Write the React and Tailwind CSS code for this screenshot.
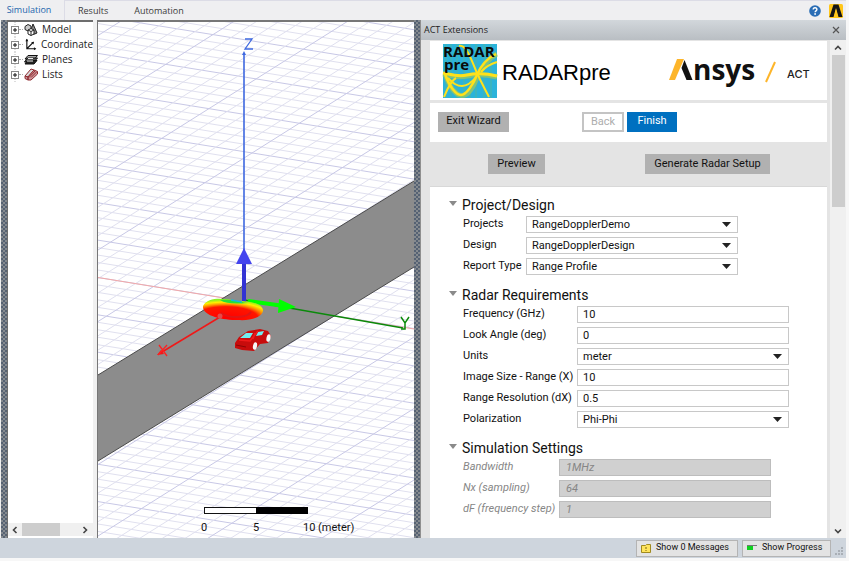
import * as React from 'react';

const TABS = ['Simulation', 'Results', 'Automation'];

const PROJECT_FIELDS = [
    { id: 'projects', label: 'Projects', value: 'RangeDopplerDemo', type: 'select' },
    { id: 'design', label: 'Design', value: 'RangeDopplerDesign', type: 'select' },
    { id: 'report', label: 'Report Type', value: 'Range Profile', type: 'select' },
];

const RADAR_FIELDS = [
    { id: 'frequency', label: 'Frequency (GHz)', value: '10' },
    { id: 'look-angle', label: 'Look Angle (deg)', value: '0' },
    { id: 'units', label: 'Units', value: 'meter', type: 'select' },
    { id: 'image-size', label: 'Image Size - Range (X)', value: '10' },
    { id: 'resolution', label: 'Range Resolution (dX)', value: '0.5' },
    { id: 'polarization', label: 'Polarization', value: 'Phi-Phi', type: 'select' },
];

const SIMULATION_FIELDS = [
    { id: 'bandwidth', label: 'Bandwidth', value: '1MHz', disabled: true },
    { id: 'nx', label: 'Nx (sampling)', value: '64', disabled: true },
    { id: 'df', label: 'dF (frequency step)', value: '1', disabled: true },
];

function HelpIcon() {
    return (
        <svg viewBox="0 0 12 12" className="h-3 w-3">
            <circle cx="6" cy="6" r="5.8" fill="#2a6db5" />
            <path d="M4.2 4.6c0-2.4 3.7-2.4 3.7 0 0 1.3-1.8 1.3-1.8 2.7" fill="none" stroke="#fff" strokeWidth="1.4" />
            <circle cx="6.1" cy="9" r="0.9" fill="#fff" />
        </svg>
    );
}

function AppIcon() {
    return (
        <svg viewBox="0 0 14 14" className="h-[14px] w-[14px]">
            <rect width="14" height="14" rx="1.5" fill="#ffc61a" />
            <path d="M0.5 13L4.5 0.5H9.5L13.5 13H9.5L7 4 4.5 13z" fill="#151515" />
            <path d="M5 13L7 5l2 8z" fill="#ffc61a" />
        </svg>
    );
}

function TabBar() {
    return (
        <nav className="flex h-5 shrink-0 items-stretch bg-[#efeff1] font-['Open_Sans',sans-serif] text-[9px] leading-[18px] text-[#3b3b3b]">
            {TABS.map((tab, i) => (
                <button
                    key={tab}
                    className={i === 0
                        ? 'w-[65px] border-r border-[#dcdce6] pr-[6px] text-center text-[#1d65ad]'
                        : 'border-t border-[#dcdce6] px-[13px] text-left'}
                >
                    {tab}
                </button>
            ))}
            <div className="flex flex-1 items-center justify-end gap-2 border-t border-[#dcdce6] pr-[3px]">
                <button aria-label="Help"><HelpIcon /></button>
                <button aria-label="Application"><AppIcon /></button>
            </div>
        </nav>
    );
}

function Splitter() {
    return <div className="w-[6px] shrink-0 bg-[repeating-conic-gradient(#566273_0_25%,#858a8f_0_50%)] bg-[size:4px_4px]" />;
}

function ModelIcon() {
    return (
        <svg viewBox="0 0 14 13" className="h-[13px] w-[14px]" fill="#fff" stroke="#222" strokeWidth="1">
            <path d="M1 3.5l3-2 3 1.5v3.5l-3 1.5-3-1.5z" fill="#c9c9c9" />
            <path d="M9 1l4 9-3.5 1.5L6.5 8z" fill="#8a8a8a" />
            <path d="M4 7l3-1.5L10 7v4l-3 1.5L4 11z" />
            <path d="M4 7l3 1.5L10 7M7 8.5v4" fill="none" />
        </svg>
    );
}

function CoordinateIcon() {
    return (
        <svg viewBox="0 0 14 13" className="h-[13px] w-[14px]" fill="none" stroke="#111">
            <path d="M3 1v10h9M3 11l7-7" strokeWidth="1.2" />
            <path d="M1.5 3L3 0.5 4.5 3zM10.5 9.5l2.5 1.5-2.5 1.5zM7.5 4l3-0.5L10 6.5z" fill="#111" stroke="none" />
        </svg>
    );
}

function PlanesIcon() {
    return (
        <svg viewBox="0 0 14 13" className="h-[13px] w-[14px]" stroke="#111">
            <path d="M4 2.5h9.5L10.5 6H1z" fill="#aaa" />
            <path d="M3.5 5h10L10 9H0.5z" fill="#555" />
            <path d="M3.5 7.5h9.5l-3 3.5H1z" fill="#222" />
            <path d="M4 5.5h5M3 8h6" stroke="#eee" />
        </svg>
    );
}

function ListsIcon() {
    return (
        <svg viewBox="0 0 14 13" className="h-[13px] w-[14px]" stroke="#8f2a30">
            <path d="M1 8L7 1l3 1-6 7z" fill="#dadada" />
            <path d="M1 8l3 1v3l-3-1.5zM4 9l6-7 3.5 1.5v2.5L7 12 4 12z" fill="#cf9a9c" />
            <path d="M5 9.5l6-6.5M7 9.5l5.5-5.5" fill="none" />
        </svg>
    );
}

const TREE = [
    { name: 'Model', Icon: ModelIcon },
    { name: 'Coordinate', Icon: CoordinateIcon },
    { name: 'Planes', Icon: PlanesIcon },
    { name: 'Lists', Icon: ListsIcon },
];

function Chevron({ d }) {
    return (
        <svg viewBox="0 0 8 8" className="h-2 w-2" fill="none" stroke="#444" strokeWidth="1.6">
            <path d={d} />
        </svg>
    );
}

function ModelTree() {
    return (
        <aside className="flex w-[86px] shrink-0 flex-col overflow-hidden border-t-2 border-l border-[#6d6d6d] bg-white">
            <ul className="flex-1 pl-[3px] font-['Open_Sans',sans-serif] text-[10px] leading-[15px] text-[#222]">
                {TREE.map(({ name, Icon }) => (
                    <li key={name} className="flex h-[15px] items-center">
                        <button aria-label={'Expand ' + name}>
                            <svg viewBox="0 0 8 15" className="h-[15px] w-2" fill="none" stroke="#555">
                                <path d="M4 0v4M4 12v3" stroke="#bbb" strokeDasharray="1 1" />
                                <rect x="0.5" y="4.5" width="7" height="7" stroke="#888" />
                                <path d="M2 8h4M4 6v4" stroke="#111" />
                            </svg>
                        </button>
                        <span className="mr-[1px] w-[4px] border-t border-dotted border-[#aaa]" />
                        <Icon />
                        <span className="ml-1">{name}</span>
                    </li>
                ))}
            </ul>
            <div className="mb-[2px] flex h-[13px] items-center bg-[#f0f0f0] pr-1">
                <button aria-label="Scroll left" className="w-[14px] pl-[3px]"><Chevron d="M5.5 1L2.5 4l3 3" /></button>
                <div className="h-full w-[38px] bg-[#cdcdcd]" />
                <button aria-label="Scroll right" className="ml-auto"><Chevron d="M2.5 1l3 3-3 3" /></button>
            </div>
        </aside>
    );
}

// Grid lines are stored as the height at which they cross the left edge.
const yLines = Array.from({ length: 78 }, (_, i) => ({ y: 255.5 + (i - 42) * 7.47, major: (i - 42) % 5 === 0 }));
const xLines = Array.from({ length: 52 }, (_, i) => ({ y: 371 + (i - 26) * 14.3, major: (i - 26) % 5 === 0 }));

function Scene() {
    return (
        <svg viewBox="0 0 316 516" preserveAspectRatio="xMidYMid slice" className="block h-full w-full" role="img" aria-label="3D view">
            <defs>
                <radialGradient id="lobe" cx="0.38" cy="0.9" r="0.86">
                    <stop offset="0" stopColor="#f00" />
                    <stop offset="0.62" stopColor="#ff1500" />
                    <stop offset="0.76" stopColor="#ff9a00" />
                    <stop offset="0.87" stopColor="#ffef00" />
                    <stop offset="1" stopColor="#90f020" />
                </radialGradient>
            </defs>
            <rect width="316" height="516" fill="#fff" />
            {yLines.map(({ y, major }) => (
                <line key={y} x1="0" y1={y} x2="316" y2={y + 51} stroke={major ? '#c8c8e6' : '#e0e0ef'} />
            ))}
            {xLines.map(({ y, major }) => (
                <line key={y} x1="0" y1={y} x2="316" y2={y - 199} stroke={major ? '#c8c8e6' : '#e0e0ef'} />
            ))}
            <line x1="0" y1="255.5" x2="316" y2="307" stroke="#f3a9a9" />
            <path d="M0 353L316 159v86L0 439z" fill="#8c8c8c" />
            <path d="M0 353L316 159M0 439L316 245" stroke="#4a4a4a" />

            <path d="M146 278L305 306" stroke="#0a8a0a" strokeWidth="1.5" />
            <path d="M303 295l4 6 4-6M307 301v6h-4" fill="none" stroke="#0a8a0a" strokeWidth="1.5" />
            <path d="M146 278V32" stroke="#3e68e0" strokeWidth="1.6" />
            <path d="M144 33l2-4 2 4z" fill="#3e68e0" />
            <path d="M147 17h7l-7 10h8" fill="none" stroke="#3e68e0" strokeWidth="1.3" />
            <path d="M146 280v-44" stroke="#3333d4" strokeWidth="4" />
            <path d="M146 226l8 16h-16z" fill="#4444ee" />

            <path d="M150 279l36 5" stroke="#0f0" strokeWidth="4" />
            <path d="M181 277l17 8-18 6z" fill="#0f0" />
            <path d="M105 284c5-9 20-8 33-5 14 0 26 2 27 9 0 7-12 11-25 10-15 0-36-4-35-14z" fill="url(#lobe)" />
            <path d="M122 278c9-1 15 1 28 3-12 1-22 1-28-3z" fill="#25e03a" />
            <path d="M133 278l11 2" stroke="#19b8d8" strokeWidth="1.5" />
            <path d="M123 291c9 6 26 5 30-1" fill="none" stroke="#e01515" strokeWidth="2" />
            <path d="M122 295L64 330" stroke="#f01818" strokeWidth="1.5" />
            <circle cx="122" cy="294" r="2.5" fill="#e24b4b" />
            <path d="M59 333l4-5 3 4z" fill="#f01818" />
            <path d="M61 323l8 11M69 323l-9 10" stroke="#ff2020" strokeWidth="1.3" />

            <path d="M137 321l4-6 9-6 12-2 8 2 3 5-3 7-8 1-6 7-12-1-7-2z" fill="#c80c0c" />
            <path d="M142 316l6-5h7l-3 5z" fill="#70eef0" />
            <path d="M158 314l2-4 6-1-2 4z" fill="#70eef0" />
            <path d="M141 318l11 1 8-10M157 311l-2 6" fill="none" stroke="#f01a1a" strokeWidth="1.5" />
            <path d="M138 323l10 2" stroke="#8d0505" />
            <ellipse cx="157" cy="324" rx="2" ry="3.8" fill="#f6f6f6" transform="rotate(12 157 324)" />
            <ellipse cx="170.5" cy="316" rx="2" ry="3.8" fill="#f6f6f6" transform="rotate(12 170.5 316)" />

            <rect x="106.5" y="485.5" width="103" height="6" fill="#fff" stroke="#111" />
            <rect x="158" y="485" width="52" height="7" fill="#000" />
            <g fontFamily="Roboto, Liberation Sans, sans-serif" fontSize="11" fill="#111">
                <text x="103" y="509">0</text>
                <text x="155" y="509">5</text>
                <text x="205" y="509">10 (meter)</text>
            </g>
        </svg>
    );
}

function RadarPicture() {
    return (
        <svg viewBox="0 0 54 54" className="h-[54px] w-[54px] overflow-visible" role="img" aria-label="RADAR pre">
            <rect width="54" height="54" fill="#2bb3da" />
            <path d="M3 0v54M8 0v54M14 0v54M21 0v54M27 0v54M33 0v54M41 0v54M48 0v54" stroke="#4db7a8" strokeWidth="1.5" opacity="0.7" />
            <g fill="none" stroke="#b6cf42" strokeWidth="5" opacity="0.6">
                <path d="M0 30c10 2 15 4 24 2s18-2 30 1" />
                <path d="M2 30c8 22 20 32 31 6 4-10 11-21 21-26" />
            </g>
            <g fill="none" stroke="#ffe11a" strokeWidth="2">
                <path d="M0 29c10 2 15 4 24 2s18-2 30 1" strokeWidth="3" />
                <path d="M2 30c4 12 11 21 16 21s12-10 16-20S45 14 53 10" strokeWidth="2.5" />
                <path d="M1 53c4-10 8-17 12-19M16 2c8-2 13 16 18 27s8 16 12 24" />
                <path d="M5 34c6 6 9 8 14 8s10-4 14-9M38 28c5-6 9-8 16-10" />
            </g>
            <g fontFamily="Open Sans, sans-serif" fontSize="15" fontWeight="700" fill="#0a0a0a">
                <text x="0" y="13">RADAR</text>
                <text x="1" y="26">pre</text>
            </g>
        </svg>
    );
}

function AnsysLogo() {
    return (
        <svg viewBox="0 -5 146 42" className="ml-auto h-[42px] w-[146px]" role="img" aria-label="Ansys ACT">
            <path d="M0 25L8 4h7L6 25z" fill="#fdb52a" />
            <path d="M15.5 5l8 20h-6L12.5 13z" fill="#111" />
            <text x="24" y="25" fontFamily="Open Sans, sans-serif" fontSize="28" fontWeight="700" fill="#111">nsys</text>
            <path d="M97 27l9-20" stroke="#fdb52a" strokeWidth="2" />
            <text x="118" y="23" fontFamily="Inter, sans-serif" fontSize="11" fontWeight="500" fill="#222">ACT</text>
        </svg>
    );
}

function Field({ field, labelClass }) {
    const { id, label, value, type, disabled } = field;
    return (
        <div className="flex h-[17px] items-center whitespace-nowrap">
            <label htmlFor={id} className={labelClass}>{label}</label>
            {type === 'select' ? (
                <span className="relative w-[212px]">
                    <select id={id} className="block h-[17px] w-full appearance-none border border-[#c8c8c8] bg-white px-[5px] leading-[15px]">
                        <option>{value}</option>
                    </select>
                    <svg viewBox="0 0 9 5" className="pointer-events-none absolute top-[6px] right-[7px] h-[5px] w-[9px]">
                        <path d="M0 0h9L4.5 5z" fill="#222" />
                    </svg>
                </span>
            ) : (
                <input
                    id={id}
                    defaultValue={value}
                    disabled={disabled}
                    className={disabled
                        ? 'h-[17px] w-[212px] border border-[#bdbdbd] bg-[#d0d0d0] px-[6px] text-[#868686] italic'
                        : 'h-[17px] w-[212px] border border-[#c8c8c8] bg-white px-[5px]'}
                />
            )}
        </div>
    );
}

function Section({ title, fields, labelClass }) {
    return (
        <section>
            <h2 className="text-[14px] leading-[21px]">
                <button className="flex h-[21px] items-center">
                    <svg viewBox="0 0 8 5" className="mr-[5px] mb-1 h-[5px] w-2">
                        <path d="M0 0h8L4 5z" fill="#8a8a8a" />
                    </svg>
                    {title}
                </button>
            </h2>
            <div className="flex flex-col gap-1 pl-[14px]">
                {fields.map((field) => (
                    <Field key={field.id} field={field} labelClass={labelClass} />
                ))}
            </div>
        </section>
    );
}

function ExtensionPanel() {
    return (
        <section className="flex w-[426px] shrink-0 flex-col border-l border-[#8f8f8f] bg-[#e4e4e4]">
            <header className="flex h-5 shrink-0 items-center justify-between bg-linear-to-b from-[#d2d7db] to-[#b9bec3] pr-[6px] pl-[3px] font-['Open_Sans',sans-serif] text-[9px] text-[#222]">
                ACT Extensions
                <button aria-label="Close">
                    <svg viewBox="0 0 8 8" className="h-2 w-2" stroke="#555" strokeWidth="1.2">
                        <path d="M1 1l6 6M7 1L1 7" />
                    </svg>
                </button>
            </header>
            <div className="flex min-h-0 flex-1">
                <div className="flex min-w-0 flex-1 flex-col pt-[1px] pr-[3px] pl-[9px] font-[Roboto,'Liberation_Sans',sans-serif] text-[11px] text-[#111]">
                    <div className="flex h-[59px] items-center bg-white pr-[12px] pl-[13px]">
                        <RadarPicture />
                        <h1 className="ml-[5px] pt-1 font-['Liberation_Sans',Arial,sans-serif] text-[22px] text-black">RADARpre</h1>
                        <AnsysLogo />
                    </div>
                    <div className="mt-[3px] flex h-[39px] items-center bg-white px-2 pb-[2px]">
                        <button className="h-5 w-[71px] bg-[#b1b1b1]">Exit Wizard</button>
                        <button className="ml-[73px] h-5 w-[42px] border-2 border-[#c4c4c4] bg-white text-[#adadad]" disabled>Back</button>
                        <button className="ml-[3px] h-5 w-[50px] bg-[#0070c0] text-white">Finish</button>
                    </div>
                    <div className="flex h-11 items-center pr-[57px] pl-[58px]">
                        <button className="h-5 w-[57px] bg-[#b1b1b1]">Preview</button>
                        <button className="ml-auto h-5 w-[125px] bg-[#b1b1b1]">Generate Radar Setup</button>
                    </div>
                    <div className="flex min-h-0 flex-1 flex-col gap-[10px] border-t border-[#d8d8d8] bg-white pt-2 pl-[19px]">
                        <Section title="Project/Design" fields={PROJECT_FIELDS} labelClass="w-[63px]" />
                        <Section title="Radar Requirements" fields={RADAR_FIELDS} labelClass="w-[114px]" />
                        <Section title="Simulation Settings" fields={SIMULATION_FIELDS} labelClass="w-[96px] text-[#868686] italic" />
                    </div>
                </div>
                <div className="flex w-[16px] flex-col items-center bg-[#f0f0f0]">
                    <button aria-label="Scroll up" className="flex h-[15px] items-center"><Chevron d="M1 5.5l3-3 3 3" /></button>
                    <div className="h-[152px] w-[13px] bg-[#cdcdcd]" />
                    <button aria-label="Scroll down" className="mt-auto flex h-[14px] items-center"><Chevron d="M1 2.5l3 3 3-3" /></button>
                </div>
            </div>
        </section>
    );
}

function StatusBar() {
    return (
        <footer className="flex h-5 shrink-0 items-center justify-end gap-1 bg-[#ced5dd] pr-[1px] font-[Roboto,sans-serif] text-[9px] whitespace-nowrap text-[#111]">
            <button className="flex h-[17px] w-[102px] items-center border border-[#b4b4b4] bg-[#e3e3e3] pl-1">
                <svg viewBox="0 0 10 9" className="mr-[5px] h-[9px] w-[10px] shrink-0">
                    <path d="M0.5 1.5h4l1-1h4v8h-9z" fill="#ffe45c" stroke="#a08a20" />
                    <path d="M5 3v2M5 6v1" stroke="#7a6510" />
                </svg>
                Show 0 Messages
            </button>
            <button className="flex h-[17px] w-[89px] items-center border border-[#b4b4b4] bg-[#e3e3e3] pl-1">
                <svg viewBox="0 0 10 6" className="mr-[5px] h-[6px] w-[10px] shrink-0">
                    <path d="M0 0.5h10" stroke="#777" />
                    <rect y="1" width="6" height="4" fill="#10d020" />
                </svg>
                Show Progress
            </button>
            <svg viewBox="0 0 10 10" className="mt-2 h-[10px] w-[10px]" fill="#a9afb6">
                <path d="M6 0h2v2H6zM3 3h2v2H3zM6 3h2v2H6zM0 6h2v2H0zM3 6h2v2H3zM6 6h2v2H6z" />
            </svg>
        </footer>
    );
}

function App() {
    return (
        <div className="flex h-screen flex-col bg-[#f7f7f7] pr-[3px] pb-[3px]">
            <TabBar />
            <main className="flex min-h-0 flex-1 bg-[#f0f0f0] pl-[1px]">
                <Splitter />
                <ModelTree />
                <div className="ml-1 min-w-0 flex-1 border-t-2 border-l border-[#777]">
                    <Scene />
                </div>
                <Splitter />
                <ExtensionPanel />
            </main>
            <StatusBar />
        </div>
    );
}

export default App;
